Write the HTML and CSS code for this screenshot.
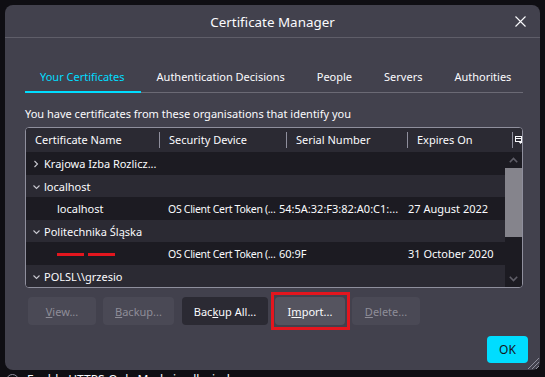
FILE: index.html
```html
<!DOCTYPE html>
<html>
<head>
<meta charset="utf-8">
<link rel="stylesheet" href="styles.css">
</head>
<body>
<div class="screen">
  <div class="dialog">
    <div class="titlebar">
      <span class="title">Certificate Manager</span>
      <svg class="close" width="11" height="11" viewBox="0 0 11 11"><path d="M0.5 0.5L10.5 10.5M10.5 0.5L0.5 10.5" stroke="#fbfbfe" stroke-width="1.1"/></svg>
    </div>
    <div class="content">
      <div class="tabs">
        <div class="tab selected">Your Certificates</div>
        <div class="tab">Authentication Decisions</div>
        <div class="tab">People</div>
        <div class="tab">Servers</div>
        <div class="tab">Authorities</div>
      </div>
      <p class="desc">You have certificates from these organisations that identify you</p>
      <div class="tree">
        <div class="thead">
          <div class="th">Certificate Name</div>
          <div class="th">Security Device</div>
          <div class="th">Serial Number</div>
          <div class="th">Expires On</div>
          <div class="th picker"><svg width="8" height="8" viewBox="0 0 8 8"><rect x="0.5" y="0.5" width="6" height="5" fill="none" stroke="#fbfbfe"/><path d="M0.5 2.5H6.5" stroke="#fbfbfe"/><path d="M3 5H8L5.5 8Z" fill="#fbfbfe"/></svg></div>
        </div>
        <div class="tbody">
          <div class="rows">
            <div class="row dark">
              <div class="td name"><svg class="chev" width="7" height="8" viewBox="0 0 7 8"><path d="M1.5 1L4.5 4L1.5 7" fill="none" stroke="#c8c8d0" stroke-width="1.1"/></svg>Krajowa Izba Rozlicz...</div>
              <div class="td"></div><div class="td"></div><div class="td"></div>
            </div>
            <div class="row">
              <div class="td name"><svg class="chev" width="7" height="8" viewBox="0 0 7 8"><path d="M0.5 2.5L3.5 5.5L6.5 2.5" fill="none" stroke="#c8c8d0" stroke-width="1.1"/></svg>localhost</div>
              <div class="td"></div><div class="td"></div><div class="td"></div>
            </div>
            <div class="row dark">
              <div class="td name child">localhost</div>
              <div class="td tight">OS Client Cert Token (...</div>
              <div class="td">54:5A:32:F3:82:A0:C1:...</div>
              <div class="td">27 August 2022</div>
            </div>
            <div class="row">
              <div class="td name"><svg class="chev" width="7" height="8" viewBox="0 0 7 8"><path d="M0.5 2.5L3.5 5.5L6.5 2.5" fill="none" stroke="#c8c8d0" stroke-width="1.1"/></svg>Politechnika Śląska</div>
              <div class="td"></div><div class="td"></div><div class="td"></div>
            </div>
            <div class="row dark">
              <div class="td name child"><span class="redact"></span><span class="redact"></span></div>
              <div class="td tight">OS Client Cert Token (...</div>
              <div class="td">60:9F</div>
              <div class="td">31 October 2020</div>
            </div>
            <div class="row">
              <div class="td name"><svg class="chev" width="7" height="8" viewBox="0 0 7 8"><path d="M0.5 2.5L3.5 5.5L6.5 2.5" fill="none" stroke="#c8c8d0" stroke-width="1.1"/></svg>POLSL\\grzesio</div>
              <div class="td"></div><div class="td"></div><div class="td"></div>
            </div>
          </div>
          <div class="scrollbar">
            <div class="arrow up"><svg width="9" height="6" viewBox="0 0 9 6"><path d="M0.8 5.2L4.5 1.5L8.2 5.2" fill="none" stroke="#5f5e68" stroke-width="1.6"/></svg></div>
            <div class="thumb"></div>
            <div class="track"></div>
            <div class="arrow down"><svg width="9" height="6" viewBox="0 0 9 6"><path d="M0.8 0.8L4.5 4.5L8.2 0.8" fill="none" stroke="#5f5e68" stroke-width="1.6"/></svg></div>
          </div>
        </div>
      </div>
      <div class="buttons">
        <button class="btn disabled w-view"><u>V</u>iew...</button>
        <button class="btn disabled w-backup"><u>B</u>ackup...</button>
        <button class="btn dark w-all">Bac<u>k</u>up All...</button>
        <span class="highlight"><button class="btn hover w-import">I<u>m</u>port...</button></span>
        <button class="btn disabled w-delete"><u>D</u>elete...</button>
      </div>
      <div class="footer">
        <button class="ok">OK</button>
      </div>
    </div>
    <svg class="grip" width="15" height="15" viewBox="0 0 15 15"><path d="M14 3L3 14M14 7L7 14M14 11L11 14" stroke="#8f8f9d" stroke-width="1"/></svg>
  </div>
  <div class="below"><span class="radio"></span>Enable HTTPS-Only Mode in all windows</div>
</div>
</body>
</html>
```

FILE: styles.css
```css
* { box-sizing: border-box; }
html, body { margin: 0; padding: 0; }
body {
  background: #0f0e13;
  font-family: "Noto Sans", "Open Sans", sans-serif;
  font-size: 11px;
  color: #fbfbfe;
  width: 545px;
  height: 377px;
  overflow: hidden;
}
.screen { padding: 5px 5px 0 5px; }
.dialog {
  position: relative;
  width: 535px;
  height: 365px;
  background: #42414d;
  border-radius: 8px;
  display: flex;
  flex-direction: column;
}
.titlebar {
  height: 33px;
  border-bottom: 1px solid #5f5e69;
  display: flex;
  align-items: center;
  justify-content: center;
  position: relative;
}
.title { font-size: 13.4px; line-height: 16px; padding-top: 2px; }
.close { position: absolute; right: 14px; top: 11px; }
.content { padding: 0 17px 0 20px; flex: 1; display: flex; flex-direction: column; }
.tabs {
  margin-top: 24px;
  display: flex;
  border-bottom: 1px solid #6b6a75;
  height: 31px;
}
.tab {
  padding: 7px 16px 0 16px;
  line-height: 16px;
  height: 31px;
  white-space: nowrap;
}
.tab.selected {
  color: #00ddff;
  border-bottom: 2px solid #00ddff;
  margin-bottom: -1px;
  padding: 7px 16px 0 15px;
}
.desc { margin: 14px 0 0 0; line-height: 14px; }
.tree {
  margin-top: 6px;
  width: 498px;
  height: 161px;
  border: 1px solid #8f8f9d;
  border-radius: 4px;
  background: #1c1b22;
  overflow: hidden;
  display: flex;
  flex-direction: column;
}
.thead {
  height: 24px;
  background: #2b2a33;
  display: grid;
  grid-template-columns: 133px 127px 121px 105px 1fr;
  align-items: center;
  flex: none;
}
.th {
  padding-left: 9px;
  white-space: nowrap;
  height: 16px;
  line-height: 16px;
  border-left: 1px solid #8f8f9d;
}
.th:first-child { border-left: none; }
.th.picker { padding-left: 2px; display: flex; align-items: center; }
.tbody { flex: 1; display: flex; min-height: 0; }
.rows { flex: 1; overflow: hidden; }
.row {
  height: 22.5px;
  background: #2b2a33;
  display: grid;
  grid-template-columns: 138px 111px 129px 102px;
  align-items: center;
  padding-top: 2px;
}
.row.dark { background: #1c1b22; }
.td {
  padding-left: 4px;
  white-space: nowrap;
  line-height: 16px;
}
.td.tight { font-size: 10.5px; letter-spacing: -0.3px; }
.td.name { padding-left: 7px; display: flex; align-items: center; overflow: hidden; }
.td.child { padding-left: 31px; }
.chev { flex: none; margin-right: 4px; }
.redact {
  display: inline-block;
  width: 27px;
  height: 3px;
  background: #e3161e;
  margin-right: 4px;
}
.scrollbar {
  width: 17px;
  display: flex;
  flex-direction: column;
  background: #1c1b22;
}
.arrow { height: 16px; display: flex; align-items: center; justify-content: center; }
.thumb { height: 69px; background: #85848c; }
.track { flex: 1; }
.buttons {
  margin-top: 9px;
  padding-left: 3px;
  display: flex;
  gap: 7px;
  align-items: center;
}
.btn {
  height: 28px;
  border: none;
  border-radius: 4px;
  font-family: inherit;
  font-size: 11px;
  padding: 0;
  color: #fbfbfe;
  display: block;
}
.btn.disabled { background: #4a4955; color: #8e8d98; }
.btn.dark { background: #2b2a33; }
.btn.hover { background: #55545f; }
.highlight {
  display: block;
  border: 3px solid #e3161e;
  padding: 2px 2px 2px 1px;
  margin: -5px -5px -5px -4px;
}
.w-view { width: 68px; }
.w-backup { width: 71px; }
.w-all { width: 86px; margin-left: 1px; }
.w-import { width: 70px; }
.w-delete { width: 68px; }
.footer {
  margin-top: 11px;
  display: flex;
  justify-content: flex-end;
}
.ok {
  width: 41px;
  height: 27px;
  margin-right: -5px;
  border: none;
  border-radius: 4px;
  background: #00ddff;
  color: #15141a;
  font-family: inherit;
  font-size: 12px;
}
.grip { position: absolute; right: 0; bottom: 0; }
.below {
  margin-top: 2px;
  padding-left: 21px;
  line-height: 16px;
  font-size: 12px;
  color: #fbfbfe;
  display: flex;
  align-items: center;
  gap: 8px;
}
.radio {
  width: 13px;
  height: 13px;
  border: 1px solid #8f8f9d;
  border-radius: 50%;
  margin-left: -20px;
}
```
